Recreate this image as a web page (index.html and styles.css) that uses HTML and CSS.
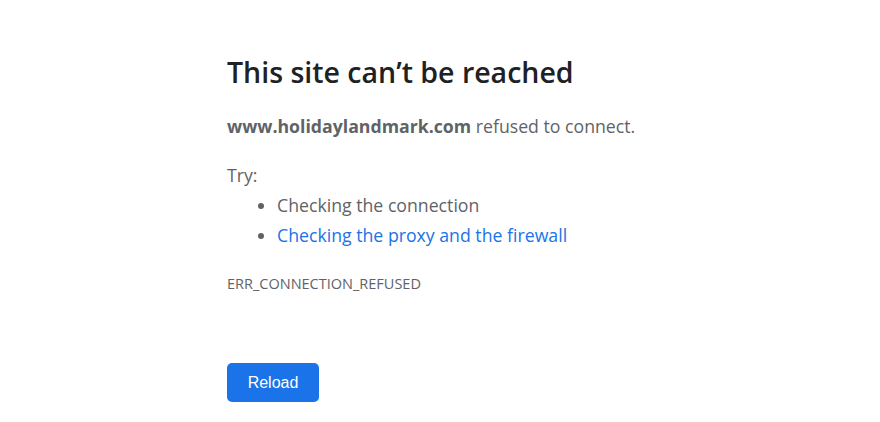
FILE: index.html
```html
<!DOCTYPE html>
<html lang="en">
<head>
<meta charset="utf-8">
<title>www.holidaylandmark.com</title>
<link rel="stylesheet" href="styles.css">
</head>
<body>
<div class="wrapper">
  <h1 class="title">This site can’t be reached</h1>
  <p class="summary"><strong>www.holidaylandmark.com</strong> refused to connect.</p>
  <div class="suggestions">
    <p class="try">Try:</p>
    <ul class="list">
      <li>Checking the connection</li>
      <li><a class="link" href="#">Checking the proxy and the firewall</a></li>
    </ul>
  </div>
  <div class="code">ERR_CONNECTION_REFUSED</div>
  <div class="actions">
    <button class="reload">Reload</button>
  </div>
</div>
</body>
</html>
```

FILE: styles.css
```css
html, body {
  margin: 0;
  padding: 0;
  background: #ffffff;
}
body {
  font-family: "Open Sans", "Noto Sans", sans-serif;
  color: #5f6368;
  font-size: 17.7px;
}
.wrapper {
  width: 426px;
  margin: 0 auto;
  padding-top: 54px;
}
.title {
  margin: 0;
  font-size: 28.5px;
  line-height: 37px;
  font-weight: 600;
  color: #202124;
}
.summary {
  margin: 20px 0 0;
  line-height: 30px;
}
.summary strong {
  font-weight: 700;
}
.suggestions {
  margin-top: 19px;
}
.try {
  margin: 0;
  line-height: 30px;
}
.list {
  margin: 0;
  padding-left: 50px;
  line-height: 30px;
}
.list li::marker {
  color: #5f6368;
}
.link {
  color: #1a73e8;
  text-decoration: none;
}
.code {
  margin-top: 24px;
  font-size: 14.5px;
  line-height: 20px;
  text-transform: uppercase;
}
.actions {
  margin-top: 69px;
}
.reload {
  width: 92px;
  height: 39px;
  border: none;
  border-radius: 5px;
  background: #1a73e8;
  color: #ffffff;
  font-family: "Liberation Sans", Arial, sans-serif;
  font-size: 16px;
  padding: 0;
}
```
